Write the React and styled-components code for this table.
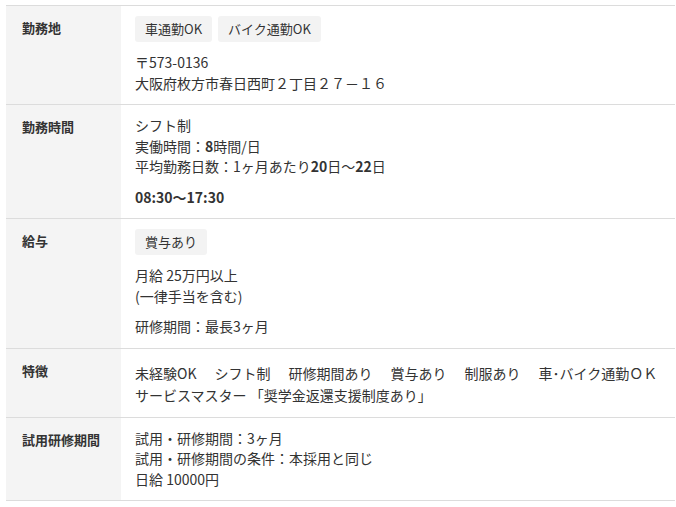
import React from "react";
import styled, { createGlobalStyle } from "styled-components";

const Global = createGlobalStyle`
  html, body { margin: 0; padding: 0; background: #fff; }
  body {
    font-family: "Noto Sans CJK JP", "Noto Sans", "Liberation Sans", sans-serif;
    color: #333;
  }
`;

const Wrap = styled.div`
  padding: 5px 1px 0 6px;
`;

const Table = styled.div`
  display: grid;
  grid-template-columns: 115px 1fr;
  border-top: 1px solid #dcdcdc;
`;

const Head = styled.div`
  background: #f4f4f4;
  border-bottom: 1px solid #dcdcdc;
  padding: 11px 16px;
  font-size: 13px;
  font-weight: 700;
  line-height: 21px;
  color: #333;
`;

const Cell = styled.div`
  border-bottom: 1px solid #dcdcdc;
  padding: 10px 14px 11px 14px;
  font-size: 14px;
  line-height: 20.5px;
  color: #333;
`;

const Block = styled.div`
  & + & { margin-top: 10px; }
  font-weight: ${(p) => (p.$bold ? 700 : 400)};
`;

const Tags = styled.div`
  display: flex;
  gap: 6px;
`;

const Tag = styled.span`
  display: inline-block;
  background: #f3f3f3;
  border-radius: 3px;
  padding: 3px 10px;
  font-size: 13px;
  line-height: 20px;
`;

const Features = styled.div`
  display: flex;
  flex-wrap: wrap;
  column-gap: 18px;
  row-gap: 2px;
  padding: 4px 0 0;
`;

const Feature = styled.span`
  white-space: nowrap;
`;

const B = styled.b`
  font-weight: 700;
`;

const features = [
  "未経験OK",
  "シフト制",
  "研修期間あり",
  "賞与あり",
  "制服あり",
  "車･バイク通勤ＯＫ",
  "サービスマスター 「奨学金返還支援制度あり」",
];

export default function App() {
  return (
    <Wrap>
      <Global />
      <Table>
        <Head>勤務地</Head>
        <Cell>
          <Block>
            <Tags>
              <Tag>車通勤OK</Tag>
              <Tag>バイク通勤OK</Tag>
            </Tags>
          </Block>
          <Block>
            〒573-0136
            <br />
            大阪府枚方市春日西町２丁目２７－１６
          </Block>
        </Cell>

        <Head>勤務時間</Head>
        <Cell>
          <Block>
            シフト制
            <br />
            実働時間：<B>8</B>時間/日
            <br />
            平均勤務日数：1ヶ月あたり<B>20</B>日～<B>22</B>日
          </Block>
          <Block $bold>08:30～17:30</Block>
        </Cell>

        <Head>給与</Head>
        <Cell>
          <Block>
            <Tags>
              <Tag>賞与あり</Tag>
            </Tags>
          </Block>
          <Block>
            月給 25万円以上
            <br />
            (一律手当を含む)
          </Block>
          <Block>研修期間：最長3ヶ月</Block>
        </Cell>

        <Head>特徴</Head>
        <Cell>
          <Features>
            {features.map((f) => (
              <Feature key={f}>{f}</Feature>
            ))}
          </Features>
        </Cell>

        <Head>試用研修期間</Head>
        <Cell>
          試用・研修期間：3ヶ月
          <br />
          試用・研修期間の条件：本採用と同じ
          <br />
          日給 10000円
        </Cell>
      </Table>
    </Wrap>
  );
}
